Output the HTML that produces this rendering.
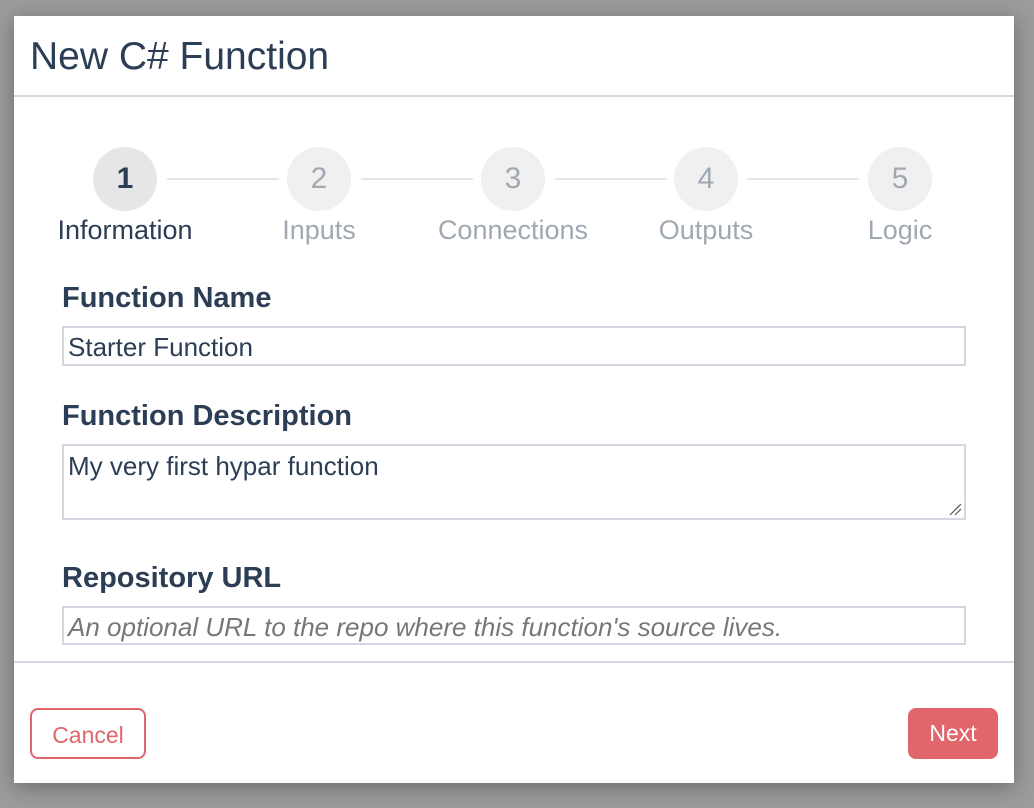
<!DOCTYPE html>
<html><head><style>
body{margin:0;width:1034px;height:808px;background:#9b9b9b;font-family:"Liberation Sans",sans-serif;overflow:hidden;position:relative}
.m{position:absolute;left:14px;top:16px;width:1000px;height:767px;background:#fff;box-shadow:0 4px 20px rgba(0,0,0,.3)}
.t{position:absolute;left:16px;top:19px;font-size:39px;color:#2c3e55}
.hl{position:absolute;left:0;width:1000px;height:2px;background:#d3d7e0}
.c{position:absolute;width:64px;height:64px;border-radius:50%;background:#f0f0f0;color:#a0a8b2;font-size:30px;text-align:center;line-height:64px;top:131px}
.ln{position:absolute;top:162px;height:2px;background:#e2e4e7;width:112px}
.lb{position:absolute;top:199px;font-size:27px;color:#a0a8b2;width:200px;text-align:center}
.f{position:absolute;left:48px;font-size:29px;font-weight:bold;color:#2c3e55}
.i{position:absolute;left:48px;width:904px;border:2px solid #d3d7e0;font-size:26px;color:#2c3e55;padding-left:4px;box-sizing:border-box}
.b{position:absolute;top:692px;height:51px;border-radius:8px;font-size:23px;text-align:center;line-height:51px;box-sizing:border-box}
</style></head><body>
<div class="m">
<div class="t">New C# Function</div>
<div class="hl" style="top:79px"></div>
<div class="c" style="left:79px;background:#e6e6e6;color:#2c3e55;font-weight:bold">1</div>
<div class="c" style="left:273px">2</div>
<div class="c" style="left:467px">3</div>
<div class="c" style="left:660px">4</div>
<div class="c" style="left:854px">5</div>
<div class="ln" style="left:153px"></div>
<div class="ln" style="left:347px"></div>
<div class="ln" style="left:541px"></div>
<div class="ln" style="left:733px"></div>
<div class="lb" style="left:11px;color:#2c3e55">Information</div>
<div class="lb" style="left:205px">Inputs</div>
<div class="lb" style="left:399px">Connections</div>
<div class="lb" style="left:592px">Outputs</div>
<div class="lb" style="left:786px">Logic</div>
<div class="f" style="top:266px">Function Name</div>
<div class="i" style="top:310px;height:40px;line-height:38px">Starter Function</div>
<div class="f" style="top:384px">Function Description</div>
<div class="i" style="top:428px;height:76px;padding-top:5px;line-height:30px">My very first hypar function
<svg style="position:absolute;right:2px;bottom:2px" width="14" height="14"><path d="M2 13L13 2M7 13L13 7" stroke="#555" stroke-width="1.2"/></svg></div>
<div class="f" style="top:546px">Repository URL</div>
<div class="i" style="top:590px;height:39px;line-height:38px;font-style:italic;color:#777">An optional URL to the repo where this function's source lives.</div>
<div class="hl" style="top:645px"></div>
<div class="b" style="left:16px;width:116px;border:2px solid #e0666b;color:#e0666b">Cancel</div>
<div class="b" style="left:894px;width:90px;background:#e0666b;color:#fff">Next</div>
</div>
</body></html>
